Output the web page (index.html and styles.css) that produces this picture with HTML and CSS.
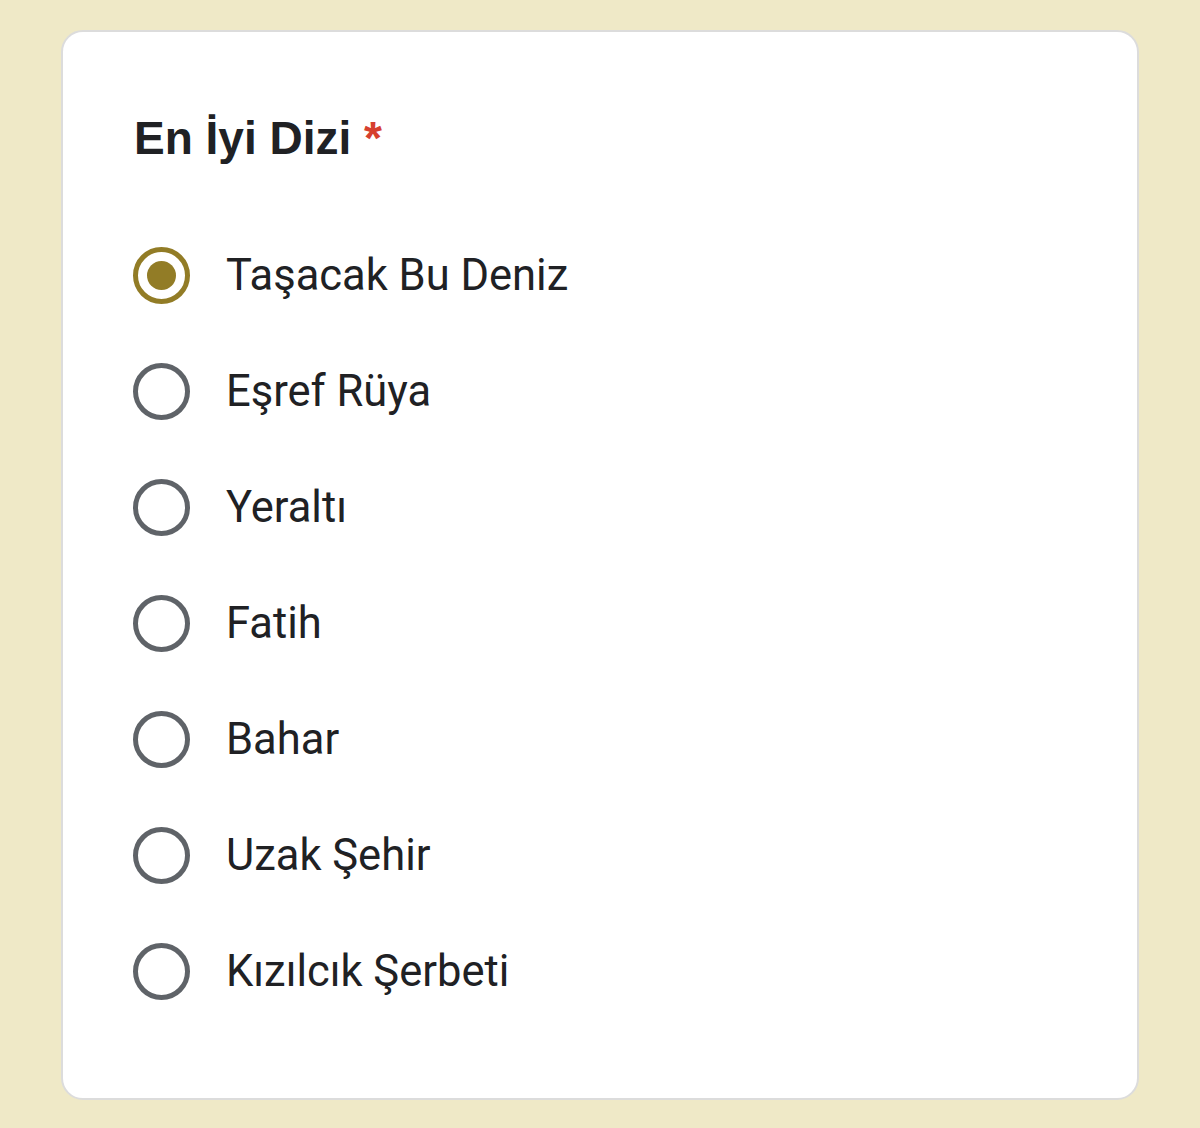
FILE: index.html
```html
<!DOCTYPE html>
<html lang="tr">
<head>
<meta charset="utf-8">
<title>En İyi Dizi</title>
<link rel="stylesheet" href="styles.css">
</head>
<body>
<div class="page">
  <div class="card">
    <h1 class="title">En İyi Dizi <span class="req">*</span></h1>
    <div class="options">
      <div class="option"><span class="radio checked"><span class="dot"></span></span><span class="label">Taşacak Bu Deniz</span></div>
      <div class="option"><span class="radio"></span><span class="label">Eşref Rüya</span></div>
      <div class="option"><span class="radio"></span><span class="label">Yeraltı</span></div>
      <div class="option"><span class="radio"></span><span class="label">Fatih</span></div>
      <div class="option"><span class="radio"></span><span class="label">Bahar</span></div>
      <div class="option"><span class="radio"></span><span class="label">Uzak Şehir</span></div>
      <div class="option"><span class="radio"></span><span class="label">Kızılcık Şerbeti</span></div>
    </div>
  </div>
</div>
</body>
</html>
```
FILE: styles.css
```css
html, body {
  margin: 0;
  padding: 0;
  background: #efe9c7;
}
.page {
  padding: 30px 61px 28px 61px;
}
.card {
  background: #ffffff;
  border: 2px solid #dcdcdc;
  border-radius: 22px;
  padding: 78px 70px 69px 70px;
  height: 1070px;
  box-sizing: border-box;
}
.title {
  margin: 0 0 51px 1px;
  font-family: "Liberation Sans", Arial, sans-serif;
  font-weight: 700;
  font-size: 46px;
  line-height: 56px;
  color: #202124;
}
.req {
  color: #d6402f;
}
.options {
  display: flex;
  flex-direction: column;
}
.option {
  height: 116px;
  display: flex;
  align-items: center;
}
.radio {
  width: 57px;
  height: 57px;
  box-sizing: border-box;
  border: 5px solid #5f6368;
  border-radius: 50%;
  display: flex;
  align-items: center;
  justify-content: center;
  flex-shrink: 0;
}
.radio.checked {
  border-color: #927c26;
}
.dot {
  width: 29px;
  height: 29px;
  border-radius: 50%;
  background: #927c26;
}
.label {
  margin-left: 36px;
  font-family: Roboto, "Noto Sans", sans-serif;
  font-size: 43.5px;
  color: #202124;
}
```
